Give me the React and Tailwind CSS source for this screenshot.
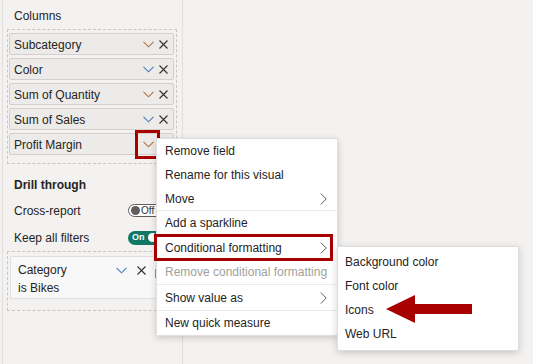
import React from "react";

const FONT = "font-['Segoe_UI','Liberation_Sans',Arial,sans-serif]";

function Chevron({ color = "#605e5c", className = "" }) {
  return (
    <svg width="11" height="7" viewBox="0 0 11 7" className={className}>
      <path d="M0.5 0.8 L5.5 5.8 L10.5 0.8" fill="none" stroke={color} strokeWidth="1.1" />
    </svg>
  );
}

function XIcon({ color = "#323130" }) {
  return (
    <svg width="9" height="9" viewBox="0 0 9 9">
      <path d="M0.5 0.5 L8.5 8.5 M8.5 0.5 L0.5 8.5" fill="none" stroke={color} strokeWidth="1.1" />
    </svg>
  );
}

function RightChevron() {
  return (
    <svg width="7" height="12" viewBox="0 0 7 12">
      <path d="M0.8 0.5 L6.2 6 L0.8 11.5" fill="none" stroke="#605e5c" strokeWidth="1" />
    </svg>
  );
}

function Pill({ label, chevColor }) {
  return (
    <div className="h-[22px] w-[165px] flex items-center border border-[#d2d0ce] bg-[#edebe9] rounded-[2px] pl-[4px] pr-[4px]">
      <span className="flex-1 text-[12px] text-[#252423] leading-none whitespace-nowrap pt-[1px]">{label}</span>
      <span className="w-[16px] flex justify-center"><Chevron color={chevColor} /></span>
      <span className="w-[12px] flex justify-center ml-[1px]"><XIcon /></span>
    </div>
  );
}

function MenuItem({ label, disabled, arrow, h = "h-[24px]" }) {
  return (
    <div className={`${h} flex items-center pl-[8px] pr-[10px]`}>
      <span className={`flex-1 text-[12px] leading-none whitespace-nowrap ${disabled ? "text-[#a19f9d]" : "text-[#252423]"}`}>{label}</span>
      {arrow && <RightChevron />}
    </div>
  );
}

function Sep() {
  return <div className="h-px bg-[#edebe9]" />;
}

export default function App() {
  const orange = "#b5703e";
  const blue = "#4a7cc0";
  return (
    <div className={`${FONT} relative w-[533px] h-[364px] bg-[#f3f2f1] overflow-hidden flex`}>
      {/* left panel */}
      <div className="ml-[2px] w-[181px] h-full border-l border-r border-[#e1dfdd] px-[4px]">
        <div className="pt-[8px] pl-[7px] h-[24px] text-[12px] leading-[16px] text-[#252423]">Columns</div>
        <div className="mt-[5px] w-[170px] border border-dashed border-[#c8c6c4] pt-[3px] pb-[8px] pl-[1px] flex flex-col gap-[3px]">
          <Pill label="Subcategory" chevColor={orange} />
          <Pill label="Color" chevColor={blue} />
          <Pill label="Sum of Quantity" chevColor={orange} />
          <Pill label="Sum of Sales" chevColor={blue} />
          <Pill label="Profit Margin" chevColor={orange} />
        </div>
        <div className="mt-[13px] pl-[7px] text-[12px] leading-[16px] font-bold text-[#252423]">Drill through</div>
        <div className="mt-[4px] pl-[7px] h-[27px] flex items-center">
          <span className="w-[114px] text-[12px] text-[#252423]">Cross-report</span>
          <div className="w-[36px] h-[13px] rounded-full border border-[#605e5c] bg-white flex items-center pl-[2px] gap-[1px]">
            <span className="w-[9px] h-[9px] rounded-full bg-[#605e5c]" />
            <span className="text-[10px] leading-none text-[#323130]">Off</span>
          </div>
        </div>
        <div className="pl-[7px] h-[27px] flex items-center">
          <span className="w-[114px] text-[12px] text-[#252423]">Keep all filters</span>
          <div className="w-[36px] h-[14px] rounded-full bg-[#117865] flex items-center pl-[4px] gap-[3px]">
            <span className="text-[9px] leading-none font-bold text-white">On</span>
            <span className="w-[9px] h-[9px] rounded-full bg-white" />
          </div>
        </div>
        <div className="mt-[0px] w-[170px] h-[60px] border border-dashed border-[#c8c6c4] pt-[4px] pl-[2px]">
          <div className="w-[163px] h-[43px] bg-[#f8f8f8] border border-[#e1dfdd] rounded-[2px] pl-[7px] pt-[4px] relative">
            <div className="flex items-center h-[18px]">
              <span className="w-[98px] text-[12px] text-[#252423]">Category</span>
              <Chevron color={blue} />
              <span className="ml-[10px]"><XIcon /></span>
            </div>
            <div className="text-[12px] leading-[19px] text-[#252423]">is Bikes</div>
            <span className="absolute left-[144px] top-[12px] w-[2px] h-[9px] bg-[#d8883f]" />
          </div>
        </div>
      </div>

      {/* Profit margin highlight */}
      <div className="absolute left-[135px] top-[130px] w-[25px] h-[29px] border-[3px] border-[#a80000]" />

      {/* context menu */}
      <div className="absolute left-[156px] top-[138px] w-[182px] bg-white border border-[#e1dfdd] shadow-[0_2px_7px_rgba(0,0,0,0.18)] flex flex-col">
        <MenuItem label="Remove field" />
        <MenuItem label="Rename for this visual" />
        <MenuItem label="Move" arrow h="h-[23px]" />
        <Sep />
        <MenuItem label="Add a sparkline" />
        <Sep />
        <MenuItem label="Conditional formatting" arrow h="h-[23px]" />
        <MenuItem label="Remove conditional formatting" disabled h="h-[25px]" />
        <Sep />
        <MenuItem label="Show value as" arrow h="h-[25px]" />
        <Sep />
        <MenuItem label="New quick measure" />
      </div>

      {/* conditional formatting highlight */}
      <div className="absolute left-[154px] top-[234px] w-[179px] h-[27px] border-[3px] border-[#a80000]" />

      {/* submenu */}
      <div className="absolute left-[337px] top-[246px] w-[182px] bg-white border border-[#e1dfdd] shadow-[0_2px_7px_rgba(0,0,0,0.18)] pt-[3px] pb-[4px] flex flex-col">
        {["Background color", "Font color", "Icons", "Web URL"].map((t) => (
          <div key={t} className="h-[24px] flex items-center pl-[7px] text-[12px] leading-none text-[#252423]">{t}</div>
        ))}
      </div>

      {/* red arrow */}
      <svg className="absolute left-[385px] top-[294px]" width="90" height="30" viewBox="0 0 90 30">
        <polygon points="1,15 30,1 30,10 87,10 87,20 30,20 30,29" fill="#a80000" />
      </svg>
    </div>
  );
}
